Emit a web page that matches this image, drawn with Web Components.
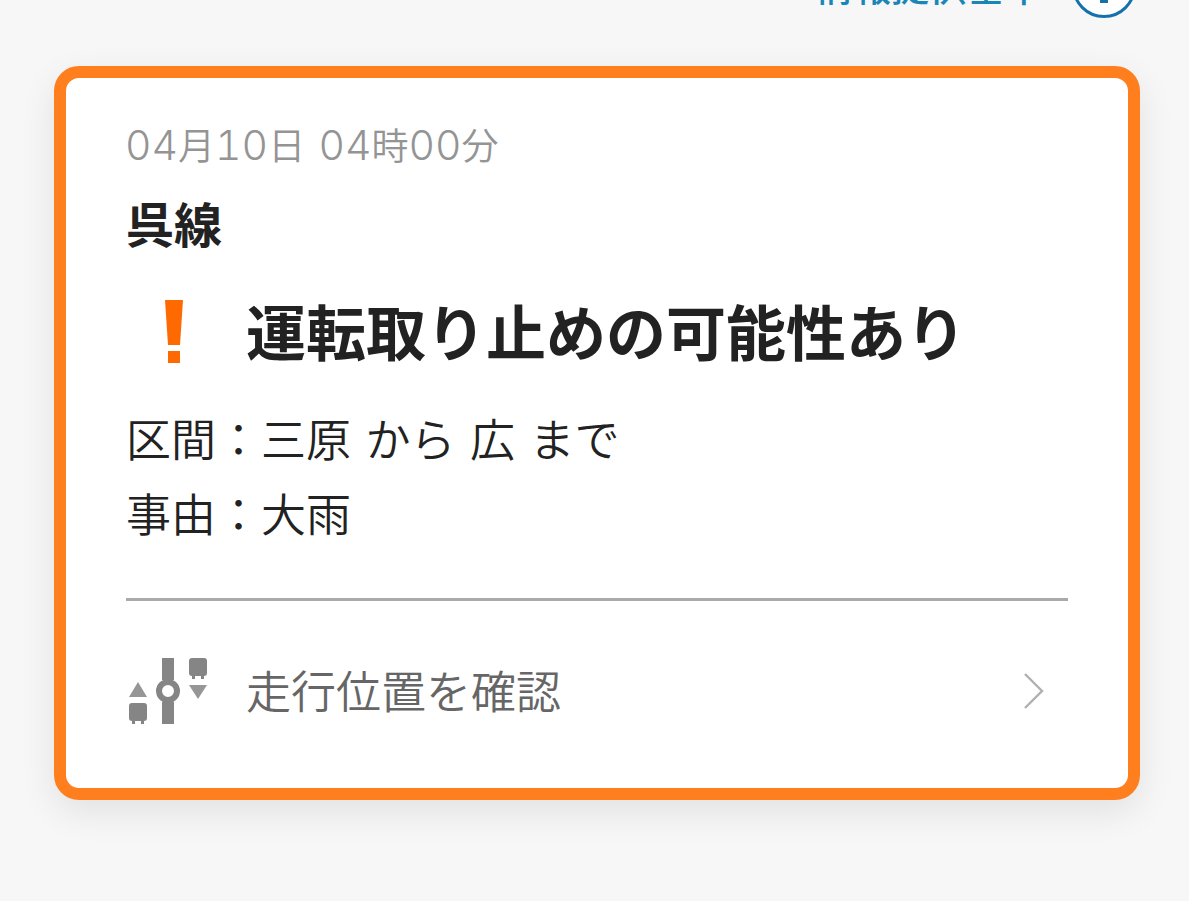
<!DOCTYPE html>
<html lang="ja">
<head>
<meta charset="utf-8">
<title>運行情報</title>
<style>
  html, body {
    margin: 0;
    height: 100%;
  }

  body {
    overflow: hidden;
    background: #f7f7f7;
    color: #222;
    font-family: "Noto Sans CJK JP", sans-serif;
  }
</style>
</head>
<body>
<status-page>
  <criteria-link slot="header" label="情報提供基準"></criteria-link>
  <service-card>
    <date-stamp slot="date" value="04月10日 04時00分"></date-stamp>
    <span slot="line">呉線</span>
    <status-title slot="status">運転取り止めの可能性あり</status-title>
    <detail-row slot="details" label="区間">三原 から 広 まで</detail-row>
    <detail-row slot="details" label="事由">大雨</detail-row>
    <position-link slot="footer">走行位置を確認</position-link>
  </service-card>
</status-page>

<script>
class StatusPage extends HTMLElement {
  constructor() {
    super();
    this.attachShadow({ mode: "open" });
    this.shadowRoot.innerHTML = `
      <style>
        :host {
          display: flex;
          flex-direction: column;
          box-sizing: border-box;
          width: 1189px;
          height: 901px;
          padding: 0 49px 0 54px;
          overflow: hidden;
        }

        header {
          display: flex;
          justify-content: flex-end;
          align-items: flex-end;
          flex: none;
          height: 18px;
          margin-bottom: 48px;
          padding-right: 4px;
        }
      </style>
      <header><slot name="header"></slot></header>
      <slot></slot>
    `;
  }
}

class CriteriaLink extends HTMLElement {
  constructor() {
    super();
    this.attachShadow({ mode: "open" });
    this.shadowRoot.innerHTML = `
      <style>
        :host {
          display: flex;
          align-items: center;
          gap: 29px;
          height: 64px;
          color: #1a86b8;
          font-size: 38px;
          font-weight: 500;
          line-height: 64px;
          white-space: nowrap;
        }

        [part="label"] {
          margin-top: -3px;
        }

        svg {
          display: block;
        }
      </style>
      <span part="label"></span>
      <svg width="64" height="64" viewBox="0 0 64 64">
        <circle cx="32" cy="32" r="30.5" fill="#fff" stroke="#1670aa" stroke-width="3"/>
        <path d="M28 14h8v8h-8zM28 27h8v22h-8z" fill="#1670aa"/>
      </svg>
    `;
  }

  connectedCallback() {
    this.shadowRoot.querySelector('[part="label"]').textContent = this.getAttribute("label") || "";
  }
}

class ServiceCard extends HTMLElement {
  constructor() {
    super();
    this.attachShadow({ mode: "open" });
    this.shadowRoot.innerHTML = `
      <style>
        :host {
          display: flex;
          flex-direction: column;
          flex: none;
          box-sizing: border-box;
          height: 734px;
          padding: 40px 60px 0;
          border: 12px solid #ff7f1e;
          border-radius: 25px;
          background: #fff;
          box-shadow: 0 12px 36px rgba(0, 0, 0, 0.09);
        }

        .line {
          margin-top: 18px;
          font-size: 48px;
          font-weight: 600;
          line-height: 68px;
        }

        .status {
          margin-top: 31px;
        }

        .details {
          display: flex;
          flex-direction: column;
          margin-top: 25px;
        }

        .footer {
          margin-top: 48px;
          border-top: 3px solid #aaa;
        }
      </style>
      <slot name="date"></slot>
      <div class="line"><slot name="line"></slot></div>
      <div class="status"><slot name="status"></slot></div>
      <div class="details"><slot name="details"></slot></div>
      <div class="footer"><slot name="footer"></slot></div>
    `;
  }
}

class DateStamp extends HTMLElement {
  constructor() {
    super();
    this.attachShadow({ mode: "open" });
    this.shadowRoot.innerHTML = `
      <style>
        :host {
          display: block;
          height: 52px;
          margin-left: -1px;
          color: #949494;
          font-size: 37px;
          font-weight: 350;
          line-height: 52px;
          word-spacing: 5px;
        }

        div {
          white-space: pre;
        }

        .digits {
          font-family: Inter, sans-serif;
          font-size: 41px;
          font-weight: 300;
          font-variant-numeric: tabular-nums;
          line-height: 1;
        }
      </style>
      <div part="date"></div>
    `;
  }

  connectedCallback() {
    const date = this.shadowRoot.querySelector('[part="date"]');
    date.textContent = "";
    // Digits are set in a wider face than the kanji
    for (const part of (this.getAttribute("value") || "").match(/\d+|\D+/g) || []) {
      const span = document.createElement("span");
      span.textContent = part;
      if (/\d/.test(part)) span.className = "digits";
      date.append(span);
    }
  }
}

class StatusTitle extends HTMLElement {
  constructor() {
    super();
    this.attachShadow({ mode: "open" });
    this.shadowRoot.innerHTML = `
      <style>
        :host {
          display: grid;
          grid-template-columns: 96px 1fr;
          column-gap: 24px;
          align-items: center;
          height: 88px;
          font-size: 60px;
          font-weight: 600;
          line-height: 88px;
          white-space: nowrap;
        }

        span {
          margin-top: -2px;
        }

        svg {
          display: block;
          justify-self: center;
        }
      </style>
      <svg width="18" height="63" viewBox="0 0 18 63" fill="#ff6a00"><path d="M0 0h18l-3 45H3zM3 51h12v12H3z"/></svg>
      <span><slot></slot></span>
    `;
  }
}

class DetailRow extends HTMLElement {
  constructor() {
    super();
    this.attachShadow({ mode: "open" });
    this.shadowRoot.innerHTML = `
      <style>
        :host {
          display: block;
          font-size: 45px;
          font-weight: 350;
          line-height: 75px;
          word-spacing: 4.5px;
          white-space: nowrap;
        }
      </style>
      <span part="label"></span><slot></slot>
    `;
  }

  connectedCallback() {
    this.shadowRoot.querySelector('[part="label"]').textContent = `${this.getAttribute("label")}：`;
  }
}

class PositionLink extends HTMLElement {
  constructor() {
    super();
    this.attachShadow({ mode: "open" });
    this.shadowRoot.innerHTML = `
      <style>
        :host {
          display: grid;
          grid-template-columns: 84px 1fr auto;
          column-gap: 36px;
          align-items: center;
          height: 180px;
          padding-right: 23px;
          color: #666;
          font-size: 45px;
          font-weight: 350;
          line-height: 66px;
          white-space: nowrap;
        }

        span {
          margin-top: -3px;
        }

        svg {
          display: block;
        }
      </style>
      <svg width="84" height="66" viewBox="0 0 84 66" fill="#858585">
        <path d="M36 0h12v22H36zM36 44h12v22H36z"/>
        <circle cx="42" cy="33" r="9" fill="none" stroke="#858585" stroke-width="6"/>
        <path d="M3 39l9-15 9 15z" fill="#969696"/>
        <rect x="3" y="45" width="18" height="18" rx="3"/>
        <path d="M6 62h3v4H6zM15 62h3v4h-3z"/>
        <rect x="63" y="0" width="18" height="18" rx="3"/>
        <path d="M66 17h3v4h-3zM75 17h3v4h-3z"/>
        <path d="M63 27h18l-9 14z" fill="#969696"/>
      </svg>
      <span><slot></slot></span>
      <svg width="22" height="38" viewBox="0 0 22 38" fill="none" stroke="#b0b0b0" stroke-width="2.4"><path d="m2 2 17 17L2 36"/></svg>
    `;
  }
}

customElements.define("status-page", StatusPage);
customElements.define("criteria-link", CriteriaLink);
customElements.define("service-card", ServiceCard);
customElements.define("date-stamp", DateStamp);
customElements.define("status-title", StatusTitle);
customElements.define("detail-row", DetailRow);
customElements.define("position-link", PositionLink);
</script>
</body>
</html>
